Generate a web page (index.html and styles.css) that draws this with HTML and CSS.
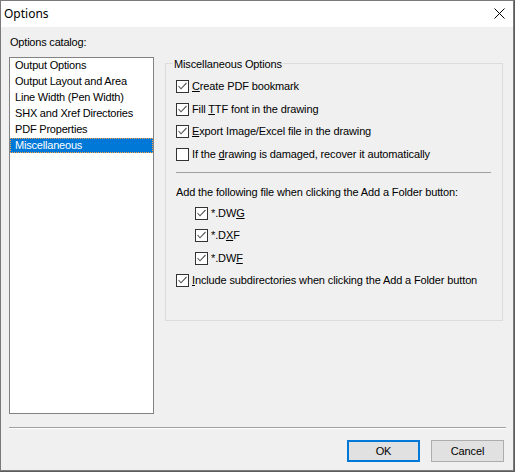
FILE: index.html
```html
<!DOCTYPE html>
<html>
<head>
<meta charset="utf-8">
<link rel="stylesheet" href="styles.css">
</head>
<body>
<div class="window">
  <div class="titlebar">
    <span class="title">Options</span>
    <span class="close"><svg width="11" height="11" viewBox="0 0 11 11"><path d="M0.5 0.5 L10.5 10.5 M10.5 0.5 L0.5 10.5" stroke="#000" stroke-width="1" fill="none"/></svg></span>
  </div>
  <div class="content">
    <div class="label">Options catalog:</div>
    <div class="main">
      <div class="list">
        <div class="item">Output Options</div>
        <div class="item">Output Layout and Area</div>
        <div class="item">Line Width (Pen Width)</div>
        <div class="item">SHX and Xref Directories</div>
        <div class="item">PDF Properties</div>
        <div class="item selected">Miscellaneous</div>
      </div>
      <fieldset class="group">
        <legend>Miscellaneous Options</legend>
        <div class="check top"><span class="box"><svg width="11" height="11" viewBox="0 0 11 11"><polyline points="1.5,5 4,7.8 9.5,2" /></svg></span><span><u>C</u>reate PDF bookmark</span></div>
        <div class="check"><span class="box"><svg width="11" height="11" viewBox="0 0 11 11"><polyline points="1.5,5 4,7.8 9.5,2" /></svg></span><span>Fill <u>T</u>TF font in the drawing</span></div>
        <div class="check"><span class="box"><svg width="11" height="11" viewBox="0 0 11 11"><polyline points="1.5,5 4,7.8 9.5,2" /></svg></span><span><u>E</u>xport Image/Excel file in the drawing</span></div>
        <div class="check"><span class="box"></span><span>If the <u>d</u>rawing is damaged, recover it automatically</span></div>
        <div class="sep"></div>
        <div class="text">Add the following file when clicking the Add a Folder button:</div>
        <div class="check sub first"><span class="box"><svg width="11" height="11" viewBox="0 0 11 11"><polyline points="1.5,5 4,7.8 9.5,2" /></svg></span><span>*.DW<u>G</u></span></div>
        <div class="check sub"><span class="box"><svg width="11" height="11" viewBox="0 0 11 11"><polyline points="1.5,5 4,7.8 9.5,2" /></svg></span><span>*.D<u>X</u>F</span></div>
        <div class="check sub"><span class="box"><svg width="11" height="11" viewBox="0 0 11 11"><polyline points="1.5,5 4,7.8 9.5,2" /></svg></span><span>*.DW<u>F</u></span></div>
        <div class="check low"><span class="box"><svg width="11" height="11" viewBox="0 0 11 11"><polyline points="1.5,5 4,7.8 9.5,2" /></svg></span><span><u>I</u>nclude subdirectories when clicking the Add a Folder button</span></div>
      </fieldset>
    </div>
    <div class="hsep"></div>
    <div class="buttons">
      <div class="btn default">OK</div>
      <div class="btn">Cancel</div>
    </div>
  </div>
</div>
</body>
</html>
```

FILE: styles.css
```css
html, body {
  margin: 0;
  padding: 0;
  background: #5c5c5c;
}
body {
  width: 515px;
  height: 472px;
  overflow: hidden;
  font-family: "Liberation Sans", Arial, sans-serif;
  font-size: 11px;
  letter-spacing: -0.13px;
  color: #000;
}
.window {
  width: 512px;
  height: 469px;
  border: 1px solid #7a7a7a;
  background: #f0f0f0;
  display: flex;
  flex-direction: column;
}
.titlebar {
  height: 26px;
  background: #fff;
  display: flex;
  align-items: center;
  justify-content: space-between;
  padding: 0 8px 0 3px;
}
.title {
  font-family: "Noto Sans", "Liberation Sans", sans-serif;
  font-size: 12px;
  letter-spacing: 0;
  margin-top: -1px;
}
.close {
  display: flex;
  width: 11px;
  height: 11px;
  margin-top: -1px;
}
.content {
  flex: 1;
  padding: 9px 0 0 8px;
  display: flex;
  flex-direction: column;
}
.label {
  line-height: 13px;
  height: 13px;
  padding-left: 1px;
  letter-spacing: -0.2px;
}
.main {
  margin-top: 8px;
  display: flex;
  align-items: flex-start;
  gap: 11px;
}
.list {
  width: 143px;
  height: 355px;
  border: 1px solid #828282;
  background: #fff;
  letter-spacing: -0.2px;
}
.item {
  height: 16px;
  line-height: 14px;
  padding-left: 5px;
  white-space: nowrap;
}
.item.selected {
  background: #0078d7;
  color: #fff;
  outline: 1px dotted #f7a24a;
  outline-offset: -1px;
  height: 15px;
}
.group {
  box-sizing: border-box;
  width: 338px;
  height: 264px;
  margin: 0;
  padding: 10px 12px 0 10px;
  border: 1px solid #dcdcdc;
  min-width: 0;
}
.group legend {
  padding: 0 1px;
  margin-left: -3px;
  line-height: 14px;
  height: 13px;
}
.check {
  display: flex;
  align-items: center;
  gap: 3px;
  height: 13px;
  line-height: 13px;
  white-space: nowrap;
  margin-top: 9.5px;
}
.check.top {
  margin-top: 0;
}
.check.sub {
  padding-left: 19px;
  margin-top: 9.4px;
}
.check.sub.first {
  margin-top: 8px;
}
.check.low {
  margin-top: 9.6px;
}
.box {
  box-sizing: border-box;
  width: 13px;
  height: 13px;
  flex: none;
  border: 1px solid #333;
  background: #fff;
  display: flex;
}
.box svg polyline {
  fill: none;
  stroke: #555;
  stroke-width: 1.1;
}
.check u, .text u {
  text-decoration: underline;
  text-underline-offset: 1px;
}
.sep {
  margin-top: 11.5px;
  height: 1px;
  background: #a0a0a0;
  width: 315px;
}
.text {
  margin-top: 13px;
  height: 13px;
  line-height: 13px;
  white-space: nowrap;
}
.hsep {
  margin-top: 13px;
  width: 497px;
  border-top: 1px solid #a0a0a0;
  border-bottom: 1px solid #fff;
  height: 0;
}
.buttons {
  margin-top: 11px;
  width: 495px;
  display: flex;
  justify-content: flex-end;
  gap: 11px;
}
.btn {
  box-sizing: border-box;
  width: 73px;
  height: 22px;
  background: #e1e1e1;
  border: 1px solid #adadad;
  display: flex;
  align-items: center;
  justify-content: center;
}
.btn.default {
  border: 2px solid #0078d7;
}
```
